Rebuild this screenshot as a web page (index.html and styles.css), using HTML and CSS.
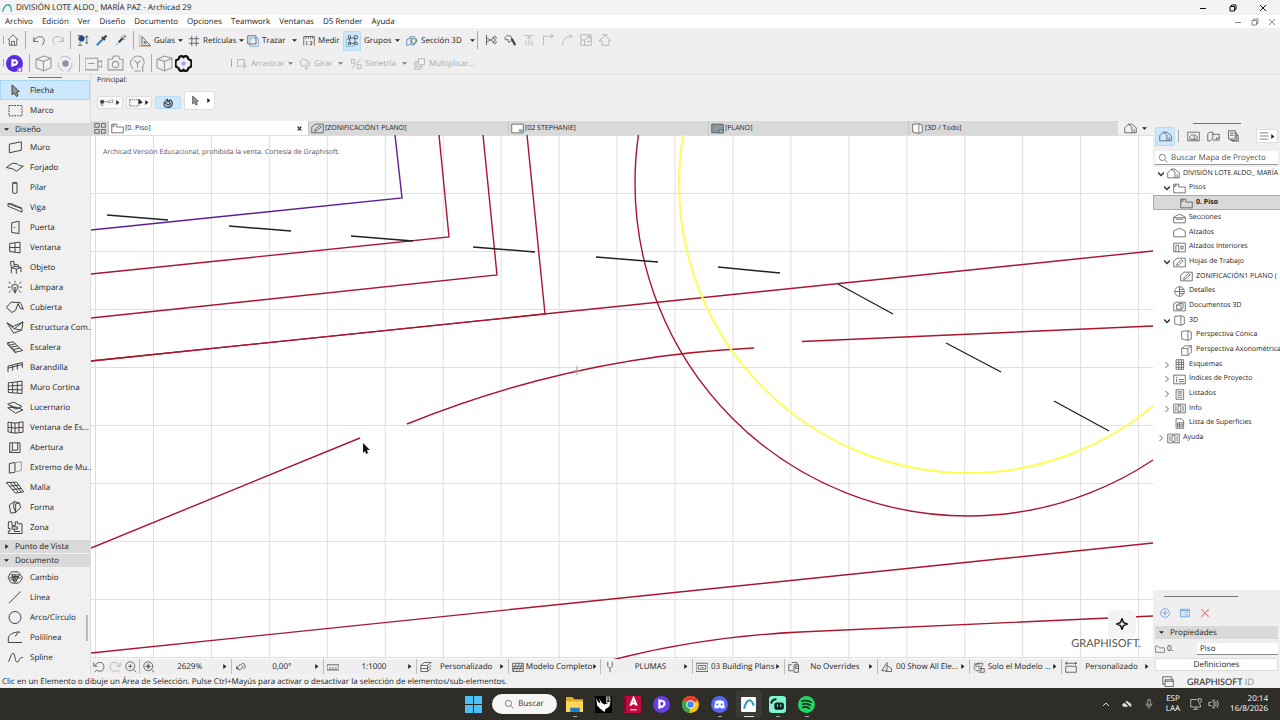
FILE: index.html
```
<!DOCTYPE html>
<html lang="es">
<head>
    <meta charset="UTF-8">
    <title>DIVISIÓN LOTE ALDO_ MARÍA PAZ - Archicad 29</title>
    <link rel="stylesheet" href="styles.css">
</head>
<body>
    <!-- icon sheet -->
    <svg class="sheet" aria-hidden="true">
        <!-- toolbox -->
        <symbol id="arrow" viewBox="0 0 54 42"><path d="M18 4V34L25 28L31 39L36 36L31 26L40 24Z" fill="#999"/></symbol>
        <symbol id="marquee" viewBox="0 0 54 42"><path d="M9 6H48V37H9Z" stroke-dasharray="5 3"/></symbol>
        <symbol id="wall" viewBox="0 0 54 42"><path d="M10 11L46 4V29L10 37Z"/></symbol>
        <symbol id="slab" viewBox="0 0 54 42"><path d="M1 21L20 8L34 10L39 15L52 17L32 32L20 25Z"/></symbol>
        <symbol id="column" viewBox="0 0 54 42"><path d="M20 7V37Q26 41 33 37V7Q26 3 20 7Q26 11 33 7"/></symbol>
        <symbol id="beam" viewBox="0 0 54 42"><path d="M6 9L48 25V35L6 17ZM6 9L14 9L48 23"/></symbol>
        <symbol id="door" viewBox="0 0 54 42"><path d="M17 7L39 2V39L17 36Z"/><circle cx="25" cy="21" r="1"/></symbol>
        <symbol id="window" viewBox="0 0 54 42"><path d="M11 9L42 5V37L11 33ZM27 7V35M11 21H42"/></symbol>
        <symbol id="chair" viewBox="0 0 54 42"><path d="M13 4L23 2L25 19L16 21ZM16 21L31 26L45 21L25 17M16 21V38M31 26V40M45 21V35M25 11L38 14V20"/></symbol>
        <symbol id="lamp" viewBox="0 0 54 42"><path d="M22 29Q15 22 18 15Q27 7 36 15Q38 22 32 29ZM23 33H31M24 37H30M27 1V6M8 4L14 10M46 4L40 10M6 20H13M41 20H48M9 36L15 30M45 36L39 30M23 19L27 24L31 19M27 24V29"/></symbol>
        <symbol id="roof" viewBox="0 0 54 42"><path d="M1 21L15 5L43 6L52 26L42 23L36 9L29 29L18 36Z"/></symbol>
        <symbol id="shell" viewBox="0 0 54 42"><path d="M3 7L22 18L51 4L47 29L23 38ZM3 7L25 25L51 4M25 25L47 29"/></symbol>
        <symbol id="stair" viewBox="0 0 54 42"><path d="M5 7L22 4L28 10L11 14ZM11 14L17 20L34 16L28 10M17 20L23 27L41 23L34 16M23 27L29 35L50 30L41 23M5 7V12L29 38V35"/></symbol>
        <symbol id="railing" viewBox="0 0 54 42"><path d="M6 17L49 6M6 17V35M20 14V30M34 10V27M49 6V22M6 23L49 12"/></symbol>
        <symbol id="curtain" viewBox="0 0 54 42"><path d="M7 7L48 2V39L7 36ZM20 5V37M34 4V38M7 17L48 14M7 27L48 28"/></symbol>
        <symbol id="skylight" viewBox="0 0 54 42"><path d="M5 11L23 5L48 18L29 26ZM5 22L29 38L51 28L30 20ZM12 14L34 24"/></symbol>
        <symbol id="corner" viewBox="0 0 54 42"><path d="M6 5L27 8L51 4V35L27 38L6 34ZM27 8V38M16 7V36M39 6V36M6 20L27 23L51 20"/></symbol>
        <symbol id="opening" viewBox="0 0 54 42"><path d="M11 7H42V36H11ZM19 8V29H35V7M19 29L12 36"/></symbol>
        <symbol id="wallend" viewBox="0 0 54 42"><path d="M10 9L27 6V35L10 38Z"/><path d="M30 6L46 4V30L30 34" stroke="#999"/></symbol>
        <symbol id="mesh" viewBox="0 0 54 42"><path d="M1 6L32 5L53 34L28 38ZM12 5L37 36M22 5L46 35M10 17L39 14M19 27L46 24"/></symbol>
        <symbol id="morph" viewBox="0 0 54 42"><path d="M10 14L25 3L40 7L44 21L29 36L14 38ZM25 3Q18 18 29 36M29 36V10L40 7"/></symbol>
        <symbol id="zone" viewBox="0 0 54 42"><path d="M7 4H18V15H28V4H35V10H48V39H7V32H12V24H7ZM18 19H34V26H18ZM25 26V33H42"/></symbol>
        <symbol id="change" viewBox="0 0 54 42"><path d="M9 15Q13 2 27 4Q40 2 43 14Q54 20 45 29Q40 40 27 38Q12 39 10 28Q3 21 9 15ZM14 13H40L29 35M9 22H44M17 18H38M14 28H34M19 13L24 35M27 13V36"/></symbol>
        <symbol id="line" viewBox="0 0 54 42"><path d="M9 38L44 3"/></symbol>
        <symbol id="circle" viewBox="0 0 54 42"><circle cx="27" cy="21" r="18"/></symbol>
        <symbol id="polyline" viewBox="0 0 54 42"><path d="M43 6L37 4Q10 7 7 22V36H48M37 4L28 18"/></symbol>
        <symbol id="spline" viewBox="0 0 54 42"><path d="M6 34C13 30 13 9 21 9C29 9 25 35 34 35C41 35 37 19 51 21"/></symbol>
        <!-- general 16px glyphs -->
        <symbol id="home" viewBox="0 0 16 16"><path d="M1 8L8 1L15 8M3 7V15H13V7M6 15V10H10V15"/></symbol>
        <symbol id="undo" viewBox="0 0 16 16"><path d="M1 4V10H7M1 10C4 2 14 1 15 9Q15 12 12 15"/></symbol>
        <symbol id="redo" viewBox="0 0 16 16"><path d="M15 4V10H9M15 10C12 2 2 1 1 9Q1 12 4 15"/></symbol>
        <symbol id="pickup" viewBox="0 0 16 16"><circle cx="6" cy="6" r="4" fill="#247" stroke="#68b"/><path d="M1 2H6M4 11V15M1 15H7M13 3V13M11 5L13 2L15 5M11 12H15"/></symbol>
        <symbol id="dropper" viewBox="0 0 16 16"><path d="M10 6L3 13L1 15" stroke="#48b" stroke-width="3"/><path d="M8 4L12 8M10 6L14 2" stroke-width="3"/></symbol>
        <symbol id="syringe" viewBox="0 0 16 16"><path d="M8 3L13 8M10 6L14 2M11 1L15 5"/><path d="M10 6L5 11" stroke-width="3"/><path d="M5 11L1 15" stroke="#48b"/></symbol>
        <symbol id="guides" viewBox="0 0 16 16"><path d="M4 2V14H15ZM7 8V11H10Z"/><path d="M1 0V16M0 15H16" stroke="#c96"/></symbol>
        <symbol id="gridic" viewBox="0 0 16 16"><path d="M5 1V15M11 1V15M1 5H15M1 11H15"/></symbol>
        <symbol id="trace" viewBox="0 0 16 16"><path d="M1 1H12V12H1Z"/><path d="M4 4H15V15H4Z" stroke="#59c"/></symbol>
        <symbol id="measure" viewBox="0 0 16 16"><path d="M1 14V2H15V14M4 2V5M7 2V5M10 2V5M13 2V5M5 8V14M9 9H12V11L9 13H12"/></symbol>
        <symbol id="groups" viewBox="0 0 16 16"><path d="M5 4H12V11H5ZM3 1H6V5H3ZM11 1H15V5H11ZM11 10H15V13H11ZM3 10H6V13H3Z"/><path d="M3 6H0V16H9V13" stroke="#59c"/></symbol>
        <symbol id="section" viewBox="0 0 16 16"><path d="M1 6L7 4V12L1 14ZM4 3L11 2L15 7L11 13H7" stroke="#37a"/><path d="M6 8L10 4L14 8L10 12Z"/></symbol>
        <symbol id="split" viewBox="0 0 16 16"><path d="M2 1V15M2 11L12 5M2 5L12 11"/><circle cx="13" cy="5" r="2"/><circle cx="13" cy="11" r="2"/></symbol>
        <symbol id="adjust" viewBox="0 0 16 16"><path d="M10 6L15 15" stroke-width="3"/><path d="M2 8L1 5L4 2L9 3L11 7L9 10L6 11L5 7Z"/></symbol>
        <symbol id="align" viewBox="0 0 16 16"><path d="M1 2H15" stroke="#9bd"/><path d="M8 3V15M5 6L8 3L11 6M4 9V15M12 9V15"/></symbol>
        <symbol id="trim" viewBox="0 0 16 16"><path d="M2 15V3H15M11 0L15 3L11 6"/></symbol>
        <symbol id="fillet" viewBox="0 0 16 16"><path d="M2 15Q2 4 14 3M10 0L15 3L12 6"/></symbol>
        <symbol id="resize" viewBox="0 0 16 16"><path d="M1 1H15V15H1ZM1 8H6V15M6 8L13 3M9 3H13V7M9 10H15"/></symbol>
        <symbol id="houseroof" viewBox="0 0 16 16"><path d="M0 9L8 2L16 9H13V15H4V9ZM4 1H12"/></symbol>
        <symbol id="cube" viewBox="0 0 16 16"><path d="M1 4L8 1L15 3V12L8 15L1 12ZM1 4L8 6L15 3M8 6V15"/></symbol>
        <symbol id="orbit" viewBox="0 0 16 16"><circle cx="8" cy="8" r="3" fill="#98a" stroke="none"/><path d="M3 3Q8-1 13 4M14 7Q15 12 10 15M6 15Q1 13 1 7" stroke="#c3bccb"/></symbol>
        <symbol id="video" viewBox="0 0 16 16"><path d="M0 3H12V14H0ZM12 7L16 5V12L12 10M3 8H9"/></symbol>
        <symbol id="camera" viewBox="0 0 16 16"><path d="M1 4H5L6 1H11L12 4H15V14H1Z"/><circle cx="8" cy="9" r="3"/></symbol>
        <symbol id="ycam" viewBox="0 0 16 16"><path d="M4 13Q0 9 2 5Q7-2 13 3Q16 8 12 12M5 5L8 8L11 5M8 8V12M5 15H11M13 12V16"/></symbol>
        <symbol id="gear" viewBox="0 0 16 16"><path d="M4 2Q6 0 8 2Q10 0 12 2Q12 4 15 5Q16 8 15 11Q12 12 12 14Q10 16 8 14Q6 16 4 14Q4 12 1 11Q0 8 1 5Q4 4 4 2Z" stroke="#111" stroke-width="2"/><circle cx="8" cy="8" r="2" fill="#b79ae0" stroke="none"/></symbol>
        <symbol id="d5" viewBox="0 0 16 16"><circle cx="8" cy="8" r="8" fill="#5a2be0" stroke="none"/><path d="M6 11V5H9Q12 7 9 9H6" stroke="#fff" stroke-width="2"/><circle cx="13" cy="14" r="2" fill="#eee" stroke="#b05ae8"/></symbol>
        <symbol id="drag" viewBox="0 0 16 16"><path d="M2 2H11V8M2 2V11H6M7 11H15M11 7V15M9 9L11 7L13 9"/></symbol>
        <symbol id="rotate" viewBox="0 0 16 16"><path d="M1 5L6 1L12 4L10 10L4 11ZM14 5Q16 12 9 14M11 11L8 14L11 16"/></symbol>
        <symbol id="mirror" viewBox="0 0 16 16"><path d="M2 15L14 1M2 2H6V7H2ZM10 9H15V14H10Z"/></symbol>
        <symbol id="multiply" viewBox="0 0 16 16"><path d="M6 1H14V9H6ZM3 5V12H11V9M6 5H1V15H9V12"/></symbol>
        <symbol id="magnet" viewBox="0 0 16 16"><path d="M3 6Q0 11 4 14Q10 17 14 12Q17 6 11 3L9 6L12 9Q10 12 7 11L4 8ZM7 1V7M4 3L9 5" stroke-width="2"/></symbol>
        <symbol id="poly" viewBox="0 0 20 12"><path d="M2 10V5H9L18 2V6H10M2 10H6" stroke-dasharray="2 1"/><path d="M1 3H5V7H1Z" fill="#333"/></symbol>
        <symbol id="mselect" viewBox="0 0 20 12"><path d="M1 2H14V11H1Z" stroke-dasharray="2 1"/><path d="M14 1V8L19 6Z" fill="#222"/></symbol>
        <symbol id="fourup" viewBox="0 0 16 16"><path d="M1 2H7V7H1ZM10 2H15V7H10ZM1 10H7V15H1ZM10 10H15V15H10Z"/></symbol>
        <symbol id="floor" viewBox="0 0 18 14"><path d="M1 1H8V5H17V13H1ZM1 4H4V1"/></symbol>
        <symbol id="sheetic" viewBox="0 0 18 14"><path d="M1 13V5L6 1H17V13ZM5 11L6 8L12 3L14 5L8 10Z"/></symbol>
        <symbol id="layout" viewBox="0 0 18 14"><path d="M1 1H17V13H1Z" fill="#fff"/><path d="M11 8H17V13H11Z" fill="#9aa" stroke="none"/></symbol>
        <symbol id="layoutdark" viewBox="0 0 18 14"><path d="M1 1H17V13H1Z" fill="#8a999f"/><path d="M11 9H17V13H11Z" fill="#b5c3c6"/></symbol>
        <symbol id="view3d" viewBox="0 0 16 16"><path d="M1 2L10 1V15L1 13ZM10 1L15 3V13L10 15" fill="#fff"/></symbol>
        <symbol id="box3d" viewBox="0 0 16 16"><path d="M1 5L6 1H15V11L10 15H1ZM1 5H10V15M10 5L15 1"/></symbol>
        <symbol id="project" viewBox="0 0 18 14"><path d="M1 13V6L6 1L11 5V13ZM6 1H11L17 6V13H11M14 8V13"/></symbol>
        <symbol id="viewmap" viewBox="0 0 18 14"><path d="M1 1H17V13H1ZM4 11V7L7 4L10 7V11ZM9 4L14 7V11H10"/></symbol>
        <symbol id="layoutbook" viewBox="0 0 18 14"><path d="M1 13V3L4 1H8V10L4 13ZM8 4H17V12H8M13 12V9H17"/></symbol>
        <symbol id="publisher" viewBox="0 0 16 16"><path d="M2 1H11V12H2ZM5 12V14H13V4H11M8 14V16H15V7H13M4 4H9M4 7H9"/></symbol>
        <symbol id="folder" viewBox="0 0 18 14"><path d="M1 13V2H6L8 5H17V13Z"/></symbol>
        <symbol id="sections" viewBox="0 0 18 14"><path d="M1 5L9 1L17 5V13H1ZM1 6H17M4 8H14"/></symbol>
        <symbol id="elev" viewBox="0 0 18 14"><path d="M1 5L9 1L17 5V13H1Z"/></symbol>
        <symbol id="interior" viewBox="0 0 18 14"><path d="M1 1H17V13H1ZM4 13V4H8V13M11 5H14V9H11Z"/></symbol>
        <symbol id="detail" viewBox="0 0 16 16"><circle cx="8" cy="8" r="7"/><path d="M1 8H15M8 1V15M8 5H14M8 11H14"/></symbol>
        <symbol id="doc3d" viewBox="0 0 18 14"><path d="M1 13V3L5 1H17V13ZM5 5H11V11H5ZM5 5L8 3H14V9L11 11"/></symbol>
        <symbol id="table" viewBox="0 0 16 16"><path d="M3 1H14V15H3ZM7 1V15M11 1V15M3 5H14M3 8H14M3 12H14"/></symbol>
        <symbol id="index" viewBox="0 0 18 14"><path d="M1 1H17V13H1ZM4 4H6M5 6V11M8 7H15M8 10H15"/></symbol>
        <symbol id="list" viewBox="0 0 16 16"><path d="M3 1H14V15H3ZM5 4H12M5 6H12M5 9H12M5 12H12"/></symbol>
        <symbol id="book" viewBox="0 0 18 14"><path d="M1 1H17V13H1ZM4 3V11M14 3V11M7 3H11V11H7Z"/></symbol>
        <symbol id="surfaces" viewBox="0 0 16 16"><path d="M3 1H10L14 4V15H3ZM5 7H12V13H5ZM8 7V13M5 10H12"/></symbol>
        <symbol id="search" viewBox="0 0 16 16"><circle cx="7" cy="7" r="5"/><path d="M11 11L15 15"/></symbol>
        <symbol id="zoomin" viewBox="0 0 16 16"><circle cx="7" cy="7" r="6"/><path d="M11 11L15 15M4 7H10M7 4V10"/></symbol>
        <symbol id="zoomfit" viewBox="0 0 16 16"><circle cx="7" cy="7" r="6"/><path d="M11 11L15 15M3 7H11M7 3V11M5 5L9 9M9 5L5 9"/></symbol>
        <symbol id="back" viewBox="0 0 16 16"><path d="M1 2V7H6M2 7Q5 1 11 2Q16 5 14 11Q10 16 5 12L2 15"/></symbol>
        <symbol id="fwd" viewBox="0 0 16 16"><path d="M15 2V7H10M14 7Q11 1 5 2Q0 5 2 11Q6 16 11 12L14 15"/></symbol>
        <symbol id="orient" viewBox="0 0 16 16"><path d="M2 10L7 4L11 8L6 12ZM9 3Q14 3 14 8L11 11M2 7V10H5"/></symbol>
        <symbol id="ruler" viewBox="0 0 16 16"><path d="M0 5H16V12H0ZM4 8V12M8 8V12M12 8V12"/></symbol>
        <symbol id="layers" viewBox="0 0 16 16"><path d="M1 6L6 2H15L10 6ZM1 10H10L15 6M1 14H10L15 10M1 6V14M10 6V14"/></symbol>
        <symbol id="model" viewBox="0 0 16 16"><path d="M1 3H15V14H1ZM2 13L6 3M6 13L10 3M10 13L14 3M1 7H15M1 10H15"/></symbol>
        <symbol id="pen" viewBox="0 0 16 16"><path d="M5 1V7L8 10L11 7V1M8 10V15"/></symbol>
        <symbol id="mvo" viewBox="0 0 16 16"><path d="M0 3H16V14H0ZM3 6H13V11H3ZM6 9H10"/></symbol>
        <symbol id="override" viewBox="0 0 16 16"><path d="M5 5H1V13H7M5 2H12V5M8 5H14V15H8ZM10 7H14V10H10Z"/></symbol>
        <symbol id="renov" viewBox="0 0 16 16"><path d="M1 13L8 2V13ZM8 6L14 10V14H6"/></symbol>
        <symbol id="solid" viewBox="0 0 16 16"><path d="M1 7L6 3H13V6M4 7H11V13H4L1 10ZM7 10H15V15H8M1 4H9"/></symbol>
        <symbol id="dims" viewBox="0 0 16 16"><path d="M0 3H16M2 1V5M14 1V5M1 7H15V15H1Z"/></symbol>
        <symbol id="minimize" viewBox="0 0 16 16"><path d="M2 9H14"/></symbol>
        <symbol id="restore" viewBox="0 0 16 16"><path d="M2 5H11V14H2ZM5 5V2H14V11H11"/></symbol>
        <symbol id="close" viewBox="0 0 16 16"><path d="M2 2L14 14M14 2L2 14"/></symbol>
        <symbol id="menu" viewBox="0 0 16 16"><path d="M1 3H15M1 8H15M1 13H15"/></symbol>
        <symbol id="plus" viewBox="0 0 16 16"><circle cx="8" cy="8" r="7"/><path d="M4 8H12M8 4V12"/></symbol>
        <symbol id="viewset" viewBox="0 0 16 16"><path d="M1 2H15V14H1ZM1 4H15M4 7H5M7 7H13M4 11H5M7 11H13"/></symbol>
        <symbol id="windows" viewBox="0 0 16 16"><path d="M4 11H1V1H13V5M4 5H15V14H4ZM4 7H15"/></symbol>
        <symbol id="logo" viewBox="0 0 16 16"><path d="M1 14Q3 5 8 3Q12 2 14 6L15 14" stroke="#2a9" stroke-width="2"/></symbol>
        <symbol id="down" viewBox="0 0 8 8"><path d="M0 2H8L4 6Z" fill="currentColor" stroke="none"/></symbol>
        <symbol id="right" viewBox="0 0 8 8"><path d="M2 0V8L7 4Z" fill="currentColor" stroke="none"/></symbol>
        <symbol id="chevdown" viewBox="0 0 8 8"><path d="M0 2L4 6L8 2" stroke-width="2"/></symbol>
        <symbol id="chevright" viewBox="0 0 8 8"><path d="M2 0L6 4L2 8"/></symbol>
    </svg>

    <header class="titlebar">
        <svg class="ic s10"><use href="#logo"/></svg>
        <span class="title">DIVISIÓN LOTE ALDO_ MARÍA PAZ - Archicad 29</span>
        <div class="winbtns">
            <button aria-label="Minimizar"><svg class="ic s8"><use href="#minimize"/></svg></button>
            <button aria-label="Restaurar"><svg class="ic s8"><use href="#restore"/></svg></button>
            <button aria-label="Cerrar"><svg class="ic s8"><use href="#close"/></svg></button>
        </div>
    </header>

    <nav class="menubar">
        <button>Archivo</button><button>Edición</button><button>Ver</button><button>Diseño</button><button>Documento</button><button>Opciones</button><button>Teamwork</button><button>Ventanas</button><button>D5 Render</button><button>Ayuda</button>
        <div class="docbtns">
            <button aria-label="Minimizar documento"><svg class="ic s8"><use href="#minimize"/></svg></button>
            <button aria-label="Restaurar documento"><svg class="ic s8"><use href="#restore"/></svg></button>
            <button aria-label="Cerrar documento"><svg class="ic s8"><use href="#close"/></svg></button>
        </div>
    </nav>

    <div class="toolbar row1">
        <div class="group grip"><button aria-label="Inicio"><svg class="ic s12"><use href="#home"/></svg></button></div>
        <div class="group sep"><button aria-label="Deshacer"><svg class="ic s12"><use href="#undo"/></svg></button><button class="off" aria-label="Rehacer"><svg class="ic s12"><use href="#redo"/></svg></button></div>
        <div class="group sep"><button aria-label="Buscar y seleccionar"><svg class="ic s12"><use href="#pickup"/></svg></button><button aria-label="Recoger parámetros"><svg class="ic s12"><use href="#dropper"/></svg></button><button aria-label="Inyectar parámetros"><svg class="ic s12"><use href="#syringe"/></svg></button></div>
        <button class="drop sep"><svg class="ic s12"><use href="#guides"/></svg>Guías<svg class="caret"><use href="#down"/></svg></button>
        <button class="drop"><svg class="ic s12"><use href="#gridic"/></svg>Retículas<svg class="caret"><use href="#down"/></svg></button>
        <button class="drop"><svg class="ic s12"><use href="#trace"/></svg>Trazar<svg class="caret"><use href="#down"/></svg></button>
        <button class="drop"><svg class="ic s12"><use href="#measure"/></svg>Medir</button>
        <button class="drop pressed"><span class="lit"><svg class="ic s12"><use href="#groups"/></svg></span>Grupos<svg class="caret"><use href="#down"/></svg></button>
        <button class="drop"><svg class="ic s12"><use href="#section"/></svg>Sección 3D<svg class="caret"><use href="#down"/></svg></button>
        <div class="group sep">
            <button aria-label="Dividir"><svg class="ic s12"><use href="#split"/></svg></button>
            <button aria-label="Ajustar"><svg class="ic s12"><use href="#adjust"/></svg></button>
            <button class="off" aria-label="Alinear"><svg class="ic s12"><use href="#align"/></svg></button>
            <button class="off" aria-label="Recortar"><svg class="ic s12"><use href="#trim"/></svg></button>
            <button class="off" aria-label="Empalme"><svg class="ic s12"><use href="#fillet"/></svg></button>
            <button class="off" aria-label="Redimensionar"><svg class="ic s12"><use href="#resize"/></svg></button>
            <button class="off" aria-label="Recortar a cubierta"><svg class="ic s12"><use href="#houseroof"/></svg></button>
        </div>
    </div>

    <div class="toolbar row2">
        <div class="group grip"><button aria-label="D5 Render"><svg class="ic s16"><use href="#d5"/></svg></button></div>
        <div class="group sep dim"><button aria-label="Modelo"><svg class="ic s16"><use href="#cube"/></svg></button><button aria-label="Órbita"><svg class="ic s16"><use href="#orbit"/></svg></button></div>
        <div class="group sep dim"><button aria-label="Vídeo"><svg class="ic s16"><use href="#video"/></svg></button><button aria-label="Cámara"><svg class="ic s16"><use href="#camera"/></svg></button><button aria-label="Sincronizar cámara"><svg class="ic s16"><use href="#ycam"/></svg></button></div>
        <div class="group sep dim"><button aria-label="Exportar"><svg class="ic s16"><use href="#cube"/></svg></button><button aria-label="Ajustes"><svg class="ic s16"><use href="#gear"/></svg></button></div>
        <div class="group"></div>
        <button class="drop grip off" disabled><svg class="ic s12"><use href="#drag"/></svg>Arrastrar<svg class="caret"><use href="#down"/></svg></button>
        <button class="drop off" disabled><svg class="ic s12"><use href="#rotate"/></svg>Girar<svg class="caret"><use href="#down"/></svg></button>
        <button class="drop off" disabled><svg class="ic s12"><use href="#mirror"/></svg>Simetría<svg class="caret"><use href="#down"/></svg></button>
        <button class="drop off" disabled><svg class="ic s12"><use href="#multiply"/></svg>Multiplicar...</button>
    </div>

    <div class="workspace">
        <aside class="toolbox">
            <div class="handle"></div>
            <button class="tool active"><svg><use href="#arrow"/></svg>Flecha</button>
            <button class="tool"><svg><use href="#marquee"/></svg>Marco</button>
            <button class="heading"><svg class="caret"><use href="#down"/></svg>Diseño</button>
            <button class="tool"><svg><use href="#wall"/></svg>Muro</button>
            <button class="tool"><svg><use href="#slab"/></svg>Forjado</button>
            <button class="tool"><svg><use href="#column"/></svg>Pilar</button>
            <button class="tool"><svg><use href="#beam"/></svg>Viga</button>
            <button class="tool"><svg><use href="#door"/></svg>Puerta</button>
            <button class="tool"><svg><use href="#window"/></svg>Ventana</button>
            <button class="tool"><svg><use href="#chair"/></svg>Objeto</button>
            <button class="tool"><svg><use href="#lamp"/></svg>Lámpara</button>
            <button class="tool"><svg><use href="#roof"/></svg>Cubierta</button>
            <button class="tool"><svg><use href="#shell"/></svg>Estructura Com...</button>
            <button class="tool"><svg><use href="#stair"/></svg>Escalera</button>
            <button class="tool"><svg><use href="#railing"/></svg>Barandilla</button>
            <button class="tool"><svg><use href="#curtain"/></svg>Muro Cortina</button>
            <button class="tool"><svg><use href="#skylight"/></svg>Lucernario</button>
            <button class="tool"><svg><use href="#corner"/></svg>Ventana de Es...</button>
            <button class="tool"><svg><use href="#opening"/></svg>Abertura</button>
            <button class="tool"><svg><use href="#wallend"/></svg>Extremo de Mu...</button>
            <button class="tool"><svg><use href="#mesh"/></svg>Malla</button>
            <button class="tool"><svg><use href="#morph"/></svg>Forma</button>
            <button class="tool"><svg><use href="#zone"/></svg>Zona</button>
            <button class="heading"><svg class="caret"><use href="#right"/></svg>Punto de Vista</button>
            <button class="heading tight"><svg class="caret"><use href="#down"/></svg>Documento</button>
            <div class="doctools">
                <button class="tool"><svg><use href="#change"/></svg>Cambio</button>
                <button class="tool"><svg><use href="#line"/></svg>Línea</button>
                <button class="tool"><svg><use href="#circle"/></svg>Arco/Círculo</button>
                <button class="tool"><svg><use href="#polyline"/></svg>Polilínea</button>
                <button class="tool"><svg><use href="#spline"/></svg>Spline</button>
                <i class="thumb"></i>
            </div>
        </aside>

        <div class="right">
            <div class="infobox">
                <span class="infolabel">Principal:</span>
                <div class="infobtns">
                    <button class="infobtn" aria-label="Selección poligonal"><svg class="ic wide"><use href="#poly"/></svg><svg class="caret"><use href="#right"/></svg></button>
                    <button class="infobtn" aria-label="Selección rápida"><svg class="ic wide"><use href="#mselect"/></svg><svg class="caret"><use href="#right"/></svg></button>
                    <button class="infobtn on" aria-label="Imán"><svg class="ic s10"><use href="#magnet"/></svg></button>
                    <button class="infobtn tall" aria-label="Flecha"><svg class="ic wide2"><use href="#arrow"/></svg><svg class="caret"><use href="#right"/></svg></button>
                </div>
            </div>

            <div class="docarea">
                <main class="center">
                    <div class="tabs">
                        <button class="overview" aria-label="Vista general"><svg class="ic s12"><use href="#fourup"/></svg></button>
                        <button class="tab current"><svg class="ic page"><use href="#floor"/></svg>[0. Piso]<svg class="x"><use href="#close"/></svg></button>
                        <button class="tab"><svg class="ic page"><use href="#sheetic"/></svg>[ZONIFICACIÓN1 PLANO]</button>
                        <button class="tab"><svg class="ic page"><use href="#layout"/></svg>[02 STEPHANIE]</button>
                        <button class="tab"><svg class="ic page"><use href="#layoutdark"/></svg>[PLANO]</button>
                        <button class="tab"><svg class="ic page"><use href="#view3d"/></svg>[3D / Todo]</button>
                        <button class="tabmenu" aria-label="Vistas"><svg class="ic page"><use href="#project"/></svg><svg class="caret"><use href="#down"/></svg></button>
                    </div>

                    <div class="canvas">
                        <svg class="drawing" viewBox="91 135 1062 524" preserveAspectRatio="xMinYMin slice">
                            <defs>
                                <pattern id="grid" x="95" y="135" width="57.95" height="58" patternUnits="userSpaceOnUse"><path d="M0.5 0V58M0 0.5H58" stroke="#dedede"/></pattern>
                            </defs>
                            <rect x="91" y="135" width="1062" height="524" fill="url(#grid)"/>
                            <g class="red">
                                <path d="M91 274L449 237L439 135M91 318L497 275L483 135M91 361L545 314L527 135"/>
                                <path d="M91 361L1153 251"/>
                                <path d="M407 424A1050 1050 0 0 1 754 348"/>
                                <path d="M802 341.5L1153 326M91 548L360 438M91 653L1153 543"/>
                                <path d="M612 660Q700 637 800 632L1153 616"/>
                                <circle cx="968" cy="183" r="333"/>
                            </g>
                            <path class="purple" d="M91 230L402 198L395 135"/>
                            <circle class="yellow" cx="968" cy="184" r="289"/>
                            <path class="black" d="M107 215L168 220M229 226L291 231M351 236L413 241M473 247L535 252M596 257L658 262M718 267L780 273M838 284L893 314M946 343L1001 372M1054 401L1109 431"/>
                            <path d="M573 371H580M577 366V375" stroke="#999"/>
                            <path d="M363 443V453L365 451L366 454L368 453L367 450H370Z" fill="#111"/>
                        </svg>
                        <span class="edu">Archicad Versión Educacional, prohibida la venta. Cortesía de Graphisoft.</span>
                        <button class="assistant" aria-label="Asistente"><svg viewBox="0 0 16 16"><path d="M8 1L10 6L15 8L10 10L8 15L6 10L1 8L6 6Z"/></svg></button>
                        <span class="brand">GRAPHISOFT.</span>
                    </div>

                    <div class="quickbar">
                        <div class="zooms">
                            <button aria-label="Zoom anterior"><svg class="ic s12"><use href="#back"/></svg></button>
                            <button class="off" aria-label="Zoom siguiente"><svg class="ic s12"><use href="#fwd"/></svg></button>
                            <button aria-label="Aumentar"><svg class="ic s12"><use href="#zoomin"/></svg></button>
                        </div>
                        <button class="quick"><svg class="ic s12"><use href="#zoomfit"/></svg><span>2629%</span><svg class="caret"><use href="#right"/></svg></button>
                        <button class="quick"><svg class="ic s12"><use href="#orient"/></svg><span>0,00°</span><svg class="caret"><use href="#right"/></svg></button>
                        <button class="quick"><svg class="ic s12"><use href="#ruler"/></svg><span>1:1000</span><svg class="caret"><use href="#right"/></svg></button>
                        <button class="quick"><svg class="ic s12"><use href="#layers"/></svg><span>Personalizado</span><svg class="caret"><use href="#right"/></svg></button>
                        <button class="quick"><svg class="ic s12"><use href="#model"/></svg><span>Modelo Completo</span><svg class="caret"><use href="#right"/></svg></button>
                        <button class="quick"><svg class="ic s12"><use href="#pen"/></svg><span>PLUMAS</span><svg class="caret"><use href="#right"/></svg></button>
                        <button class="quick"><svg class="ic s12"><use href="#mvo"/></svg><span>03 Building Plans</span><svg class="caret"><use href="#right"/></svg></button>
                        <button class="quick"><svg class="ic s12"><use href="#override"/></svg><span>No Overrides</span><svg class="caret"><use href="#right"/></svg></button>
                        <button class="quick"><svg class="ic s12"><use href="#renov"/></svg><span>00 Show All Ele...</span><svg class="caret"><use href="#right"/></svg></button>
                        <button class="quick"><svg class="ic s12"><use href="#solid"/></svg><span>Solo el Modelo ...</span><svg class="caret"><use href="#right"/></svg></button>
                        <button class="quick"><svg class="ic s12"><use href="#dims"/></svg><span>Personalizado</span><svg class="caret"><use href="#right"/></svg></button>
                    </div>
                </main>

                <aside class="navigator">
                    <div class="handle"></div>
                    <div class="navtabs">
                        <button class="on" aria-label="Mapa de Proyecto"><svg class="ic page"><use href="#project"/></svg></button>
                        <i class="bar"></i>
                        <button aria-label="Mapa de Vistas"><svg class="ic page"><use href="#viewmap"/></svg></button>
                        <button aria-label="Libro de Planos"><svg class="ic page"><use href="#layoutbook"/></svg></button>
                        <button aria-label="Editor"><svg class="ic s12"><use href="#publisher"/></svg></button>
                        <button class="navmenu" aria-label="Menú"><svg class="ic s10"><use href="#menu"/></svg><svg class="caret"><use href="#right"/></svg></button>
                    </div>
                    <label class="navsearch"><svg class="ic s10"><use href="#search"/></svg><input type="text" aria-label="Buscar" placeholder="Buscar Mapa de Proyecto"></label>
                    <ul class="tree">
                        <li class="l0"><svg class="chev"><use href="#chevdown"/></svg><svg class="ic page"><use href="#project"/></svg>DIVISIÓN LOTE ALDO_ MARÍA</li>
                        <li class="l1"><svg class="chev"><use href="#chevdown"/></svg><svg class="ic page"><use href="#floor"/></svg>Pisos</li>
                        <li class="l2 selected"><svg class="ic page"><use href="#floor"/></svg>0. Piso</li>
                        <li class="l1 leaf"><svg class="ic page"><use href="#sections"/></svg>Secciones</li>
                        <li class="l1 leaf"><svg class="ic page"><use href="#elev"/></svg>Alzados</li>
                        <li class="l1 leaf"><svg class="ic page"><use href="#interior"/></svg>Alzados Interiores</li>
                        <li class="l1"><svg class="chev"><use href="#chevdown"/></svg><svg class="ic page"><use href="#sheetic"/></svg>Hojas de Trabajo</li>
                        <li class="l2"><svg class="ic page"><use href="#sheetic"/></svg>ZONIFICACIÓN1 PLANO (</li>
                        <li class="l1 leaf"><svg class="ic page"><use href="#detail"/></svg>Detalles</li>
                        <li class="l1 leaf"><svg class="ic page"><use href="#doc3d"/></svg>Documentos 3D</li>
                        <li class="l1"><svg class="chev"><use href="#chevdown"/></svg><svg class="ic page"><use href="#view3d"/></svg>3D</li>
                        <li class="l2"><svg class="ic page"><use href="#view3d"/></svg>Perspectiva Cónica</li>
                        <li class="l2"><svg class="ic page"><use href="#box3d"/></svg>Perspectiva Axonométrica</li>
                        <li class="l1"><svg class="chev"><use href="#chevright"/></svg><svg class="ic page"><use href="#table"/></svg>Esquemas</li>
                        <li class="l1"><svg class="chev"><use href="#chevright"/></svg><svg class="ic page"><use href="#index"/></svg>Índices de Proyecto</li>
                        <li class="l1"><svg class="chev"><use href="#chevright"/></svg><svg class="ic page"><use href="#list"/></svg>Listados</li>
                        <li class="l1"><svg class="chev"><use href="#chevright"/></svg><svg class="ic page"><use href="#book"/></svg>Info</li>
                        <li class="l1 leaf"><svg class="ic page"><use href="#surfaces"/></svg>Lista de Superficies</li>
                        <li class="l0"><svg class="chev"><use href="#chevright"/></svg><svg class="ic page"><use href="#book"/></svg>Ayuda</li>
                    </ul>
                    <div class="props">
                        <div class="handle"></div>
                        <div class="propbtns">
                            <button class="blue" aria-label="Añadir"><svg class="ic s10"><use href="#plus"/></svg></button>
                            <button class="blue" aria-label="Parámetros"><svg class="ic s10"><use href="#viewset"/></svg></button>
                            <button class="pink" aria-label="Borrar"><svg class="ic s10"><use href="#close"/></svg></button>
                        </div>
                        <button class="heading"><svg class="caret"><use href="#down"/></svg>Propiedades</button>
                        <label class="prop"><svg class="ic s10"><use href="#folder"/></svg><span>0.</span><input type="text" value="Piso"></label>
                        <button class="settings">Definiciones</button>
                    </div>
                </aside>
            </div>
        </div>
    </div>

    <footer class="status">
        <span>Clic en un Elemento o dibuje un Área de Selección. Pulse Ctrl+Mayús para activar o desactivar la selección de elementos/sub-elementos.</span>
        <div class="gsid"><svg class="ic s12"><use href="#windows"/></svg><span>GRAPHISOFT <em>ID</em></span></div>
    </footer>

    <div class="taskbar">
        <div class="apps">
            <button class="app start" aria-label="Inicio"><svg viewBox="0 0 16 16"><path d="M0 0H7.500V7.500H0ZM8.500 0H16V7.500H8.500ZM0 8.500H7.500V16H0ZM8.500 8.500H16V16H8.500Z" fill="#4cc2f4"/></svg></button>
            <button class="pill"><svg class="ic s10"><use href="#search"/></svg>Buscar</button>
            <button class="app run" aria-label="Explorador de archivos"><svg viewBox="0 0 16 16"><path d="M0 1H6L8 3H16V15H0Z" fill="#e9a91f"/><path d="M0 5H16V15H0Z" fill="#ffd75e"/><path d="M4 11H13V15H4Z" fill="#1a7fc4"/></svg></button>
            <button class="app" aria-label="Rhino 8"><svg viewBox="0 0 16 16"><path d="M0 0H16V16H0Z" fill="#000"/><path d="M1 1Q2 6 5 7L4 2Q6 7 9 8L14 6Q15 10 10 12L9 15L5 12L2 9Z" fill="#fff"/><path d="M11 1H14V3H11V6H14V3H11Z" stroke="#ccc" fill="none"/></svg></button>
            <button class="app" aria-label="AutoCAD"><svg viewBox="0 0 16 16"><rect width="16" height="16" rx="1" fill="#c3093f"/><path d="M0 1H2V15H0Z" fill="#7d0b2d"/><path d="M6 9L9 2L12 9M7 7H11" stroke="#fff" stroke-width="2" fill="none"/><path d="M6 13H12" stroke="#fff"/></svg></button>
            <button class="app" aria-label="D5 Render"><svg viewBox="0 0 16 16"><circle cx="8" cy="8" r="8" fill="#6a3de0"/><path d="M6 12V4L10 5Q12 8 9 10H6" stroke="#fff" stroke-width="2" fill="none"/></svg></button>
            <button class="app" aria-label="Chrome"><svg viewBox="0 0 16 16"><circle cx="8" cy="8" r="8" fill="#fbc116"/><path d="M8 8L1 4A8 8 0 0 1 15 4Z" fill="#e33b2e"/><path d="M8 8L1 4A8 8 0 0 0 7 16Z" fill="#2da94f"/><circle cx="8" cy="8" r="4" fill="#fff"/><circle cx="8" cy="8" r="3" fill="#4285f4"/></svg></button>
            <button class="app run" aria-label="Discord"><svg viewBox="0 0 16 16"><circle cx="8" cy="8" r="8" fill="#5865f2"/><path d="M4 5Q8 3 12 5L13 11L10 12L9 11H7L6 12L3 11Z" fill="#fff"/><circle cx="6" cy="8" r="1" fill="#5865f2"/><circle cx="10" cy="8" r="1" fill="#5865f2"/></svg></button>
            <button class="app run front" aria-label="Archicad"><svg viewBox="0 0 16 16"><rect x="1" y="1" width="14" height="14" rx="1" fill="#fff"/><path d="M4 12Q5 5 9 4Q11 4 13 9" stroke="#2f9fc4" stroke-width="2" fill="none"/></svg></button>
            <button class="app run" aria-label="Streamlabs"><svg viewBox="0 0 16 16"><rect width="16" height="16" rx="3" fill="#80f5d2"/><rect x="5" y="6" width="9" height="7" rx="2" fill="#122"/><path d="M2 7Q3 3 7 3" stroke="#122" stroke-width="2" fill="none"/><path d="M8 8V10M11 8V10" stroke="#80f5d2"/></svg></button>
            <button class="app run" aria-label="Spotify"><svg viewBox="0 0 16 16"><circle cx="8" cy="8" r="8" fill="#1ed760"/><path d="M3 5Q8 3 13 6M4 8Q8 6 12 9M4 11Q8 9 11 12" stroke="#122" stroke-width="1.500" fill="none"/></svg></button>
        </div>
        <div class="tray">
            <svg class="ic s8" viewBox="0 0 8 8"><path d="M1 6L4 3L7 6"/></svg>
            <svg class="ic s10" viewBox="0 0 16 16"><path d="M2 12Q-1 7 4 7Q7 1 11 6Q16 7 14 12Z" fill="#ddd"/><path d="M3 3L13 14" stroke="#2e2d28" stroke-width="2"/></svg>
            <svg class="ic s10" viewBox="0 0 16 16"><path d="M6 1H10V9H6ZM3 7Q3 12 8 12Q13 12 13 7M8 12V16"/></svg>
            <span class="lang">ESP<br>LAA</span>
            <svg class="ic s12" viewBox="0 0 16 16"><path d="M10 2H1V12H14V9M4 15H11M8 12V15M11 1H15V5Q13 8 11 5ZM13 7V9"/></svg>
            <svg class="ic s12" viewBox="0 0 16 16"><path d="M1 6H4L8 2V14L4 10H1ZM10 5Q12 8 10 11M12 3Q16 8 12 13"/></svg>
            <span class="clock">20:14<br>16/8/2026</span>
        </div>
    </div>
</body>
</html>
```
FILE: styles.css
```
* {
    box-sizing: border-box;
}
body {
    margin: 0;
    height: 100vh;
    display: flex;
    flex-direction: column;
    overflow: hidden;
    background: #efefef;
    color: #222;
    font-family: "Open Sans", "Noto Sans", sans-serif;
    font-size: 8px;
    font-weight: 500;
    line-height: 12px;
    text-rendering: geometricPrecision;
}
button, input {
    font: inherit;
    color: inherit;
    text-rendering: inherit;
    background: none;
    border: 0;
    padding: 0;
    margin: 0;
    white-space: nowrap;
}
svg {
    display: block;
    flex: none;
    fill: none;
    stroke: currentColor;
}
.sheet {
    position: absolute;
    width: 0;
    height: 0;
}
.ic { color: #444; }
.s8 { width: 8px; height: 8px; stroke-width: 2; }
.s10 { width: 10px; height: 10px; stroke-width: 1; }
.s12 { width: 12px; height: 12px; }
.s16 { width: 17px; height: 17px; }
.page { width: 13px; height: 11px; }
.caret { width: 5px; height: 5px; color: #222; }

/* title and menu */
.titlebar {
    height: 15px;
    display: flex;
    align-items: center;
    gap: 4px;
    padding-left: 2px;
    background: #f3f3f3;
}
.winbtns, .docbtns {
    margin-left: auto;
    display: flex;
}
.winbtns { padding-right: 2px; }
.winbtns button { width: 30px; display: grid; place-items: center; }
.winbtns .ic { color: #111; }
.docbtns button { width: 17px; display: grid; place-items: center; }
.docbtns .ic { color: #888; }
.docbtns { align-items: center; }
.menubar {
    height: 13px;
    display: flex;
    padding: 1px 0 0 5px;
    gap: 9px;
    background: #fff;
}

/* toolbars */
.toolbar {
    display: grid;
    align-items: center;
}
.row1 {
    height: 24px;
    grid-template-columns: 25px 45px 63px 51px 59px 56px 43px 60px 75px 140px;
}
.row2 {
    height: 23px;
    grid-template-columns: 29px 50px 72px 45px 35px 63px 51px 64px 80px;
    border-bottom: 1px solid #e2e2e2;
}
.group, .drop {
    height: 18px;
    display: flex;
    align-items: center;
}
.group {
    justify-content: space-around;
    padding: 0 3px;
}
.drop {
    gap: 3px;
    padding: 1px 2px 0 5px;
}
.drop .caret { margin-left: auto; }
.sep { border-left: 1px solid #aaa; }
.grip {
    background: linear-gradient(#aaa, #aaa) 3px 50% / 1px 8px no-repeat;
}
.drop.grip { background-position: 0 50%; background-size: 1px 8px; }
.row1 .drop:not(.sep) { padding-left: 4px; }
.dim .ic { color: #999; }
.off, .off .ic { color: #aaa; }
.off .caret { color: #777; }
.lit {
    width: 18px;
    height: 20px;
    display: grid;
    place-items: center;
    background: #cce8ff;
    border: 1px solid #b5dcf5;
}
.row1 .drop.pressed { padding-left: 1px; }

/* toolbox */
.workspace {
    flex: 1;
    min-height: 0;
    display: flex;
}
.toolbox {
    width: 91px;
    flex: none;
    display: flex;
    flex-direction: column;
    border-right: 1px solid #ddd;
    background: #f0f0f0;
}
.handle {
    width: 34px;
    height: 1px;
    margin: 2px auto;
    flex: none;
    background: #777;
}
.tool {
    height: 20px;
    flex: none;
    display: flex;
    align-items: center;
    gap: 6px;
    padding: 1px 0 0 6px;
    width: 100%;
}
.tool svg {
    width: 18px;
    height: 15px;
    stroke: #444;
    stroke-width: 3;
}
.tool.active {
    background: #cce8ff;
    border: 1px solid #a8d8f5;
    padding-left: 5px;
}
.heading {
    height: 13px;
    flex: none;
    display: flex;
    align-items: center;
    gap: 6px;
    margin: 3px 0 1px;
    padding-left: 4px;
    background: #d9d9d9;
}
.heading.tight { margin: 0; }
.doctools { position: relative; }
.thumb {
    position: absolute;
    right: 2px;
    top: 48px;
    width: 2px;
    height: 26px;
    background: #bbb;
}

/* info box */
.right {
    flex: 1;
    min-width: 0;
    display: flex;
    flex-direction: column;
}
.infobox {
    height: 46px;
    padding-left: 6px;
}
.infolabel {
    font-size: 7px;
    line-height: 12px;
    display: block;
}
.infobtns {
    display: flex;
    align-items: center;
    gap: 3px;
    height: 26px;
}
.infobtn {
    width: 26px;
    height: 13px;
    display: flex;
    align-items: center;
    justify-content: space-evenly;
    margin-top: 5px;
    background: #f9f9f9;
    border: 1px solid #ddd;
    border-radius: 2px;
}
.infobtn.on { background: #cce8ff; border-color: #b5dcf5; }
.infobtn.tall { width: 31px; height: 19px; margin-top: 0; background: #fff; }
.wide { width: 14px; height: 9px; }
.wide2 { width: 14px; height: 11px; stroke-width: 3; }

/* tabs */
.docarea {
    flex: 1;
    min-height: 0;
    display: flex;
}
.center {
    flex: 1;
    min-width: 0;
    display: flex;
    flex-direction: column;
}
.tabs {
    height: 14px;
    flex: none;
    display: flex;
    background: #d9d9d9;
}
.overview {
    width: 17px;
    display: grid;
    place-items: center;
}
.tab {
    flex: 0 1 200px;
    display: flex;
    align-items: center;
    gap: 1px;
    padding: 1px 6px 0 2px;
    border-left: 1px solid #c6c6c6;
    font-size: 7px;
}
.tab.current { background: #fff; }
.x {
    width: 5px;
    height: 5px;
    margin-left: auto;
    stroke-width: 4;
}
.tabmenu {
    width: 35px;
    margin-left: auto;
    display: flex;
    align-items: center;
    justify-content: space-evenly;
    background: #efefef;
}

/* drawing */
.canvas {
    flex: 1;
    min-height: 0;
    position: relative;
    background: #fff;
}
.drawing {
    width: 100%;
    height: 100%;
    stroke: none;
}
.red, .purple, .black { stroke-width: 1.4; }
.red { stroke: #ab1530; }
.purple { stroke: #5c1f96; }
.yellow { stroke: #fdfd55; stroke-width: 2; }
.black { stroke: #222; }
.edu {
    position: absolute;
    left: 12px;
    top: 12px;
    color: #555;
    font-size: 7px;
    font-weight: 400;
}
.assistant {
    position: absolute;
    right: 17px;
    bottom: 21px;
    width: 28px;
    height: 28px;
    display: grid;
    place-items: center;
    background: #f4f4f4;
    border-radius: 5px;
}
.assistant svg {
    width: 12px;
    height: 12px;
    stroke: #111;
    stroke-width: 2;
}
.brand {
    position: absolute;
    right: 12px;
    bottom: 8px;
    font: 11px/14px Lato, sans-serif;
    color: #555;
}

/* quick options */
.quickbar {
    height: 15px;
    flex: none;
    display: flex;
}
.zooms {
    width: 48px;
    display: flex;
    align-items: center;
    justify-content: space-around;
}
.quick {
    flex: 1;
    min-width: 0;
    display: flex;
    align-items: center;
    padding: 0 4px 0 3px;
    border-left: 1px solid #bbb;
}
.quick span { flex: 1; text-align: center; padding-left: 2px; }

/* navigator */
.navigator {
    width: 127px;
    flex: none;
    display: flex;
    flex-direction: column;
    background: linear-gradient(#efefef 46px, #fff 46px);
}
.navigator > .handle { width: 48px; }
.navtabs {
    height: 20px;
    flex: none;
    display: flex;
    align-items: center;
    padding-left: 2px;
}
.navtabs button {
    width: 20px;
    height: 19px;
    display: grid;
    place-items: center;
}
.navtabs .on { background: #cce8ff; border: 1px solid #b5dcf5; border-radius: 2px; }
.bar {
    width: 1px;
    height: 12px;
    margin: 0 4px 0 3px;
    background: #aaa;
}
.navtabs .navmenu {
    width: 22px;
    height: 14px;
    margin: 0 2px 0 auto;
    display: flex;
    align-items: center;
    justify-content: space-evenly;
    background: #fff;
    border: 1px solid #ddd;
}
.navsearch {
    height: 14px;
    margin: 5px 2px 1px;
    display: flex;
    align-items: center;
    gap: 3px;
    padding: 1px 0 0 3px;
    background: #fff;
    border-bottom: 1px solid #999;
}
.navsearch input { width: 100%; outline: none; }
::placeholder { color: #555; opacity: 1; }
.tree {
    list-style: none;
    margin: 0;
    padding: 0;
    height: 279px;
    display: grid;
    grid-auto-rows: 1fr;
    overflow: hidden;
    font-size: 7px;
}
.tree li {
    display: flex;
    align-items: center;
    gap: 3px;
    padding-top: 1px;
    white-space: nowrap;
}
.tree .chev { width: 6px; height: 6px; color: #333; }
.tree .l0 { padding-left: 5px; }
.tree .l1 { padding-left: 11px; }
.tree .leaf { padding-left: 20px; }
.tree .l2 { padding-left: 27px; }
.tree .selected {
    background: #d9d9d9;
    border: 1px solid #aaa;
    border-right: 0;
    padding-left: 26px;
    font-weight: 700;
}
.props {
    margin-top: auto;
    padding: 4px 2px 3px;
    display: flex;
    flex-direction: column;
    background: #efefef;
}
.props .handle { width: 74px; margin: 2px 0 6px 9px; }
.propbtns {
    height: 20px;
    display: flex;
    gap: 10px;
    padding-left: 5px;
    align-items: center;
}
.blue .ic { color: #3a82d0; }
.pink .ic { color: #e78f8f; stroke-width: 2; }
.prop {
    height: 14px;
    margin: 2px 0;
    display: flex;
    align-items: center;
    gap: 2px;
}
.prop span { width: 28px; }
.prop input {
    flex: 1;
    min-width: 0;
    height: 12px;
    padding-left: 3px;
    background: #fff;
    border-bottom: 1px solid #888;
}
.settings {
    height: 13px;
    background: #fff;
    border: 1px solid #ddd;
    border-radius: 2px;
}

/* status line */
.status {
    height: 14px;
    flex: none;
    display: flex;
    align-items: center;
    justify-content: space-between;
    padding: 1px 26px 0 2px;
    background: #f1f1f1;
}
.gsid {
    display: flex;
    gap: 13px;
    align-items: center;
    font: 9px/14px Lato, sans-serif;
}
.gsid em { font-style: normal; color: #999; }

/* taskbar */
.taskbar {
    height: 32px;
    flex: none;
    display: grid;
    grid-template-columns: 1fr auto 1fr;
    align-items: center;
    background: #2e2d28;
    color: #fff;
}
.apps {
    grid-column: 2;
    display: flex;
    align-items: center;
    gap: 3px;
}
.app {
    width: 26px;
    height: 28px;
    display: grid;
    place-items: center;
    position: relative;
    border-radius: 3px;
}
.app svg { width: 17px; height: 17px; stroke: none; }
.app.start { margin-right: 2px; }
.app.front { background: #3b3a36; }
.run::after {
    content: "";
    position: absolute;
    bottom: 1px;
    left: 11px;
    width: 4px;
    height: 1px;
    background: #aaa;
}
.run.front::after { left: 8px; width: 10px; background: #ddd; }
.pill {
    width: 65px;
    height: 20px;
    display: flex;
    align-items: center;
    justify-content: center;
    gap: 4px;
    margin-right: 2px;
    border-radius: 10px;
    background: #f5f5f5;
    color: #333;
}
.tray {
    display: flex;
    align-items: center;
    justify-content: flex-end;
    gap: 10px;
    padding-right: 12px;
    line-height: 10px;
}
.tray .ic { color: #ddd; stroke-width: 1; }
.tray .s8, .tray .s10 { margin-right: 2px; }
.tray .s12 + .s12 { margin-left: -4px; }
.lang { text-align: center; }
.clock { text-align: right; }
```
